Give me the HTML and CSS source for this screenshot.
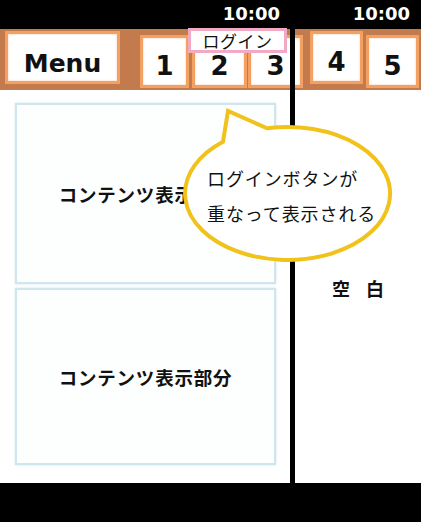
FILE: index.html
```html
<!DOCTYPE html>
<html lang="ja">
<head>
<meta charset="utf-8">
<link rel="stylesheet" href="styles.css">
</head>
<body>
<div class="page">
  <div class="status">
    <div class="status-left">10:00</div>
    <div class="status-right">10:00</div>
  </div>
  <div class="header">
    <div class="tab tab-menu">Menu</div>
    <div class="tab tab-1">1</div>
    <div class="tab tab-2">2</div>
    <div class="tab tab-3">3</div>
    <div class="tab tab-4">4</div>
    <div class="tab tab-5">5</div>
  </div>
  <div class="main">
    <div class="left-col">
      <div class="card card-1">コンテンツ表示部分</div>
      <div class="card card-2">コンテンツ表示部分</div>
    </div>
    <div class="right-col">空 白</div>
  </div>
  <div class="footer"></div>

  <div class="divider"></div>
  <div class="login">ログイン</div>
  <div class="bubble">
    <svg class="bubble-shape" viewBox="180 105 215 162" width="215" height="162">
      <path d="M 223 141.8 L 228 111 L 267 128.3 A 102.5 66.5 0 1 1 223 141.8 Z" fill="#ffffff" stroke="#f1c21c" stroke-width="4" stroke-linejoin="miter"/>
    </svg>
    <div class="bubble-text">ログインボタンが<br>重なって表示される</div>
  </div>
</div>
</body>
</html>
```

FILE: styles.css
```css
html, body {
  margin: 0;
  padding: 0;
  background: #ffffff;
}

body {
  font-family: "DejaVu Sans", "Noto Sans CJK JP", sans-serif;
  color: #111;
}

.page {
  position: relative;
  width: 421px;
  height: 522px;
  overflow: hidden;
  display: flex;
  flex-direction: column;
}

.status {
  height: 29px;
  background: #000;
  display: flex;
  color: #fff;
  font-weight: bold;
  font-size: 18px;
  line-height: 27px;
}

.status-left {
  width: 290px;
  box-sizing: border-box;
  text-align: right;
  padding-right: 10px;
}

.status-right {
  flex: 1;
  text-align: right;
  padding-right: 11px;
}

.header {
  height: 61px;
  background: #c37a4d;
  display: flex;
  align-items: center;
  padding-left: 5px;
  overflow: hidden;
}

.tab {
  flex: none;
  box-sizing: border-box;
  height: 53px;
  border: 3px solid #f3a063;
  background: #fff;
  display: flex;
  align-items: center;
  justify-content: center;
  font-weight: bold;
  font-size: 26px;
  color: #111;
  padding-top: 9px;
  box-shadow: inset 0 0 2px rgba(240, 150, 90, 0.6);
}

.tab-menu {
  width: 115px;
  font-size: 25px;
  margin-top: -4px;
  padding-top: 11px;
}

.tab-1 {
  width: 49px;
  margin-left: 20px;
  margin-top: 3px;
}

.tab-2 {
  width: 55px;
  margin-left: 3px;
  margin-top: 3px;
}

.tab-3 {
  width: 55px;
  margin-left: 1px;
  margin-top: 3px;
}

.tab-4 {
  width: 53px;
  margin-left: 7px;
  margin-top: -4px;
}

.tab-5 {
  width: 53px;
  margin-left: 3px;
  margin-top: 3px;
}

.main {
  height: 393px;
  display: flex;
}

.left-col {
  width: 290px;
  box-sizing: border-box;
  padding: 13px 0 0 15px;
  display: flex;
  flex-direction: column;
  gap: 4px;
}

.card {
  width: 261px;
  box-sizing: border-box;
  border: 2px solid #cfe6ef;
  background: #fdfefe;
  box-shadow: 0 0 2px rgba(160, 200, 215, 0.5);
  display: flex;
  align-items: center;
  justify-content: center;
  font-family: "Noto Sans CJK JP", sans-serif;
  font-weight: bold;
  font-size: 18.5px;
  letter-spacing: 0.8px;
  color: #111;
}

.card-1 {
  height: 181px;
}

.card-2 {
  height: 177px;
}

.right-col {
  flex: 1;
  display: flex;
  align-items: center;
  justify-content: center;
  font-family: "Noto Sans CJK JP", sans-serif;
  font-weight: bold;
  font-size: 18px;
  word-spacing: 12px;
  padding-left: 5px;
  padding-top: 2px;
}

.footer {
  flex: 1;
  background: #000;
}

.divider {
  position: absolute;
  left: 290px;
  top: 0;
  width: 5px;
  height: 483px;
  background: #000;
}

.login {
  position: absolute;
  left: 188px;
  top: 28px;
  width: 99px;
  height: 25px;
  box-sizing: border-box;
  border: 3px solid #f2aac4;
  background: #fff;
  font-family: "Noto Sans CJK JP", sans-serif;
  font-size: 17px;
  line-height: 19px;
  text-align: center;
  color: #111;
  letter-spacing: 0.5px;
}

.bubble {
  position: absolute;
  left: 180px;
  top: 105px;
  width: 215px;
  height: 162px;
}

.bubble-shape {
  display: block;
}

.bubble-text {
  position: absolute;
  left: 27px;
  top: 56px;
  font-family: "Noto Sans CJK JP", sans-serif;
  font-size: 18px;
  line-height: 35px;
  letter-spacing: 0.9px;
  color: #111;
  white-space: nowrap;
}
```
